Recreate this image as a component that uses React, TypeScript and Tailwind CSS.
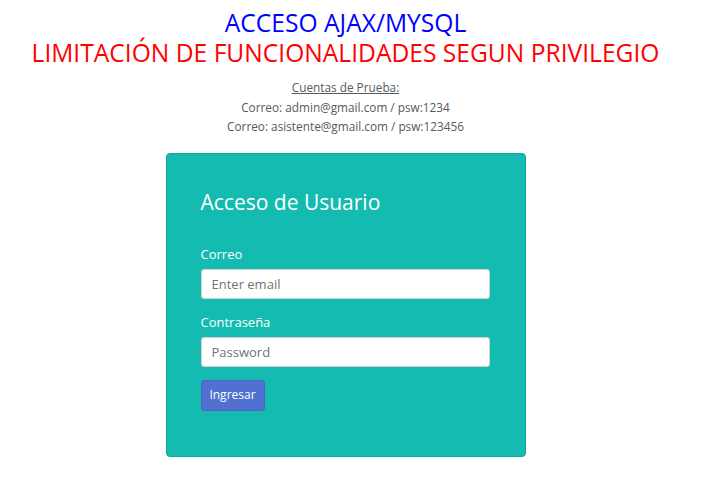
import React from "react";

export default function App() {
  return (
    <div className="w-[691px] bg-white pt-[8px] text-center" style={{ fontFamily: '"Open Sans", "Noto Sans", sans-serif' }}>
      <h1 className="text-[24.6px] leading-[29px] text-[#0000ff] font-normal">ACCESO AJAX/MYSQL</h1>
      <h2 className="text-[24.6px] leading-[31px] text-[#ff0000] font-normal">LIMITACIÓN DE FUNCIONALIDADES SEGUN PRIVILEGIO</h2>
      <div className="mt-[10px] text-[11.8px] leading-[19.5px] text-[#595959]">
        <p className="underline">Cuentas de Prueba:</p>
        <p>Correo: admin@gmail.com / psw:1234</p>
        <p>Correo: asistente@gmail.com / psw:123456</p>
      </div>
      <div className="mx-auto mt-[16px] w-[360px] h-[304px] rounded-[4px] border border-[#10a89d] bg-[#14bbb0] px-[34px] pt-[33px] text-left">
        <h3 className="text-[21px] leading-[30px] text-white font-normal">Acceso de Usuario</h3>
        <div className="mt-[27px]">
          <label className="block text-[13px] leading-[20px] text-white">Correo</label>
          <input
            type="email"
            placeholder="Enter email"
            className="mt-[5px] block h-[30px] w-[289px] rounded-[3px] border border-[#ced4da] bg-white px-[10px] text-[13px] text-[#495057] placeholder:text-[#6c757d] outline-none"
          />
        </div>
        <div className="mt-[13px]">
          <label className="block text-[13px] leading-[20px] text-white">Contraseña</label>
          <input
            type="password"
            placeholder="Password"
            className="mt-[5px] block h-[30px] w-[289px] rounded-[3px] border border-[#ced4da] bg-white px-[10px] text-[13px] text-[#495057] placeholder:text-[#6c757d] outline-none"
          />
        </div>
        <button className="mt-[13px] h-[31px] w-[64px] rounded-[3px] border border-[#4a67c8] bg-[#5170d1] text-[12px] text-white">
          Ingresar
        </button>
      </div>
    </div>
  );
}
